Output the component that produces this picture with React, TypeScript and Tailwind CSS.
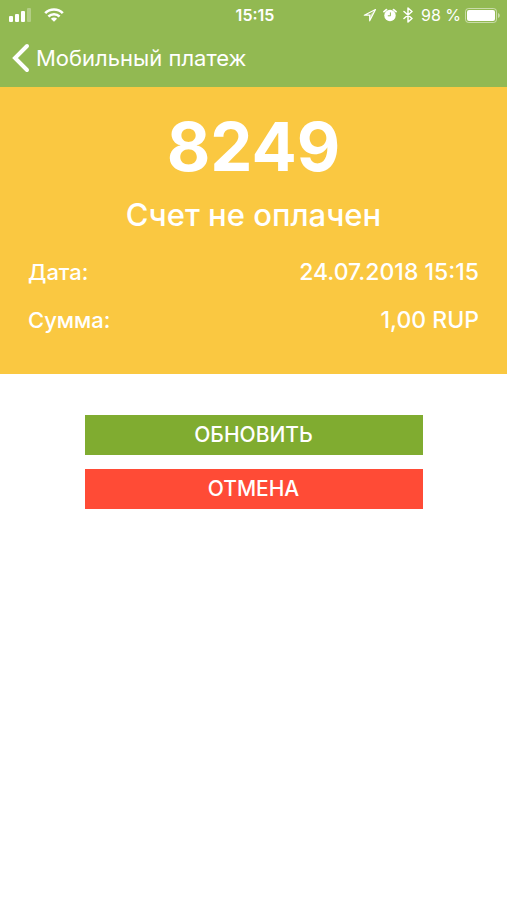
import React from 'react';

interface Detail {
  label: string;
  value: string;
}

const details: Detail[] = [
  { label: 'Дата:', value: '24.07.2018 15:15' },
  { label: 'Сумма:', value: '1,00 RUP' },
];

const SignalIcon = () => (
  <svg width="23" height="14" viewBox="0 0 23 14" fill="currentColor" aria-hidden="true">
    <rect x="0" y="8" width="4" height="6" rx="1" />
    <rect x="6" y="6" width="4" height="8" rx="1" />
    <rect x="12" y="3" width="4" height="11" rx="1" />
    <rect x="18" y="0" width="4" height="14" rx="1" opacity="0.3" />
  </svg>
);

const WifiIcon = () => (
  <svg width="20" height="14" viewBox="0 0 20 14" fill="none" stroke="currentColor" aria-hidden="true">
    <path d="M1.2 5.1a12.6 12.6 0 0 1 17.6 0" strokeWidth="2.7" />
    <path d="M4.4 8.5a8 8 0 0 1 11.2 0" strokeWidth="2.5" />
    <path d="M10 13.8 6.9 10.8a4.3 4.3 0 0 1 6.2 0Z" fill="currentColor" stroke="none" />
  </svg>
);

const LocationIcon = () => (
  <svg width="14" height="14" viewBox="0 0 14 14" fill="none" stroke="currentColor" strokeWidth="1.2" strokeLinejoin="round" aria-hidden="true">
    <path d="M12.5 1.5 1.3 7.2h5.4v5.6Z" />
    <path d="M12.5 1.5 6.7 7.2v5.6Z" fill="currentColor" fillOpacity="0.5" stroke="none" />
  </svg>
);

const AlarmIcon = () => (
  <svg width="14" height="14" viewBox="0 0 14 14" fill="none" stroke="currentColor" strokeLinecap="round" aria-hidden="true">
    <circle cx="7" cy="7.5" r="5.7" fill="currentColor" stroke="none" />
    <path d="M1 3.6 3.4 1.6M13 3.6l-2.4-2" strokeWidth="1.8" />
    <path d="M7.4 4.8v3H5.2" className="stroke-[#92b952]" strokeWidth="1" />
  </svg>
);

const BluetoothIcon = () => (
  <svg width="10" height="16" viewBox="0 0 10 16" fill="none" stroke="currentColor" strokeWidth="1.5" strokeLinejoin="round" strokeLinecap="round" aria-hidden="true">
    <path d="m1 4.5 8 7-4 3.5V1l4 3.5-8 7" />
  </svg>
);

const BatteryIcon = () => (
  <svg width="36" height="15" viewBox="0 0 36 15" fill="none" aria-hidden="true">
    <rect x="0.5" y="0.5" width="31" height="14" rx="3" stroke="currentColor" strokeOpacity="0.5" />
    <rect x="2" y="2" width="28" height="11" rx="2" fill="currentColor" />
    <path d="M33 5c2.4.8 2.4 4.2 0 5Z" fill="currentColor" fillOpacity="0.5" />
  </svg>
);

const BackIcon = () => (
  <svg width="18" height="30" viewBox="0 0 18 30" fill="none" stroke="currentColor" strokeWidth="4" strokeLinecap="round" aria-hidden="true">
    <path d="M15 3 3 15l12 12" />
  </svg>
);

const StatusBar = () => (
  <div className="grid h-[30px] grid-cols-[1fr_auto_1fr] items-center pl-[9px] pr-1.5">
    <div className="flex items-center gap-3">
      <SignalIcon />
      <WifiIcon />
    </div>
    <time className="text-[16px] font-semibold leading-5">15:15</time>
    <div className="flex items-center justify-end">
      <div className="flex items-center gap-1.5 pr-2">
        <LocationIcon />
        <AlarmIcon />
        <BluetoothIcon />
      </div>
      <span className="pr-1 text-[16px] leading-5">98 %</span>
      <BatteryIcon />
    </div>
  </div>
);

export default function App() {
  return (
    <div className="min-h-screen bg-white font-[Inter,'Noto_Sans',sans-serif] text-white">
      <header className="bg-[#92b952]">
        <StatusBar />
        <nav className="flex h-[57px] items-start pl-3 pt-[13px]">
          <button type="button" className="flex items-center gap-1.5 text-[22px] leading-7">
            <BackIcon />
            Мобильный платеж
          </button>
        </nav>
      </header>

      <main>
        <section className="bg-[#fac841] px-7 pb-10 pt-5 font-medium">
          <h1 className="text-center text-[67px] font-bold leading-20">8249</h1>
          <p className="pt-2 text-center text-[31px] leading-10">Счет не оплачен</p>
          <dl className="flex flex-col gap-5 pt-[23px] leading-7">
            {details.map(({ label, value }) => (
              <div key={label} className="flex justify-between">
                <dt className="text-[22px]">{label}</dt>
                <dd className="text-[23px]">{value}</dd>
              </div>
            ))}
          </dl>
        </section>

        <div className="mx-auto flex w-2/3 flex-col gap-3.5 pt-[41px] text-[21px] font-medium leading-10">
          <button type="button" className="bg-[#80ac30]">ОБНОВИТЬ</button>
          <button type="button" className="bg-[#ff4b36]">ОТМЕНА</button>
        </div>
      </main>
    </div>
  );
}
